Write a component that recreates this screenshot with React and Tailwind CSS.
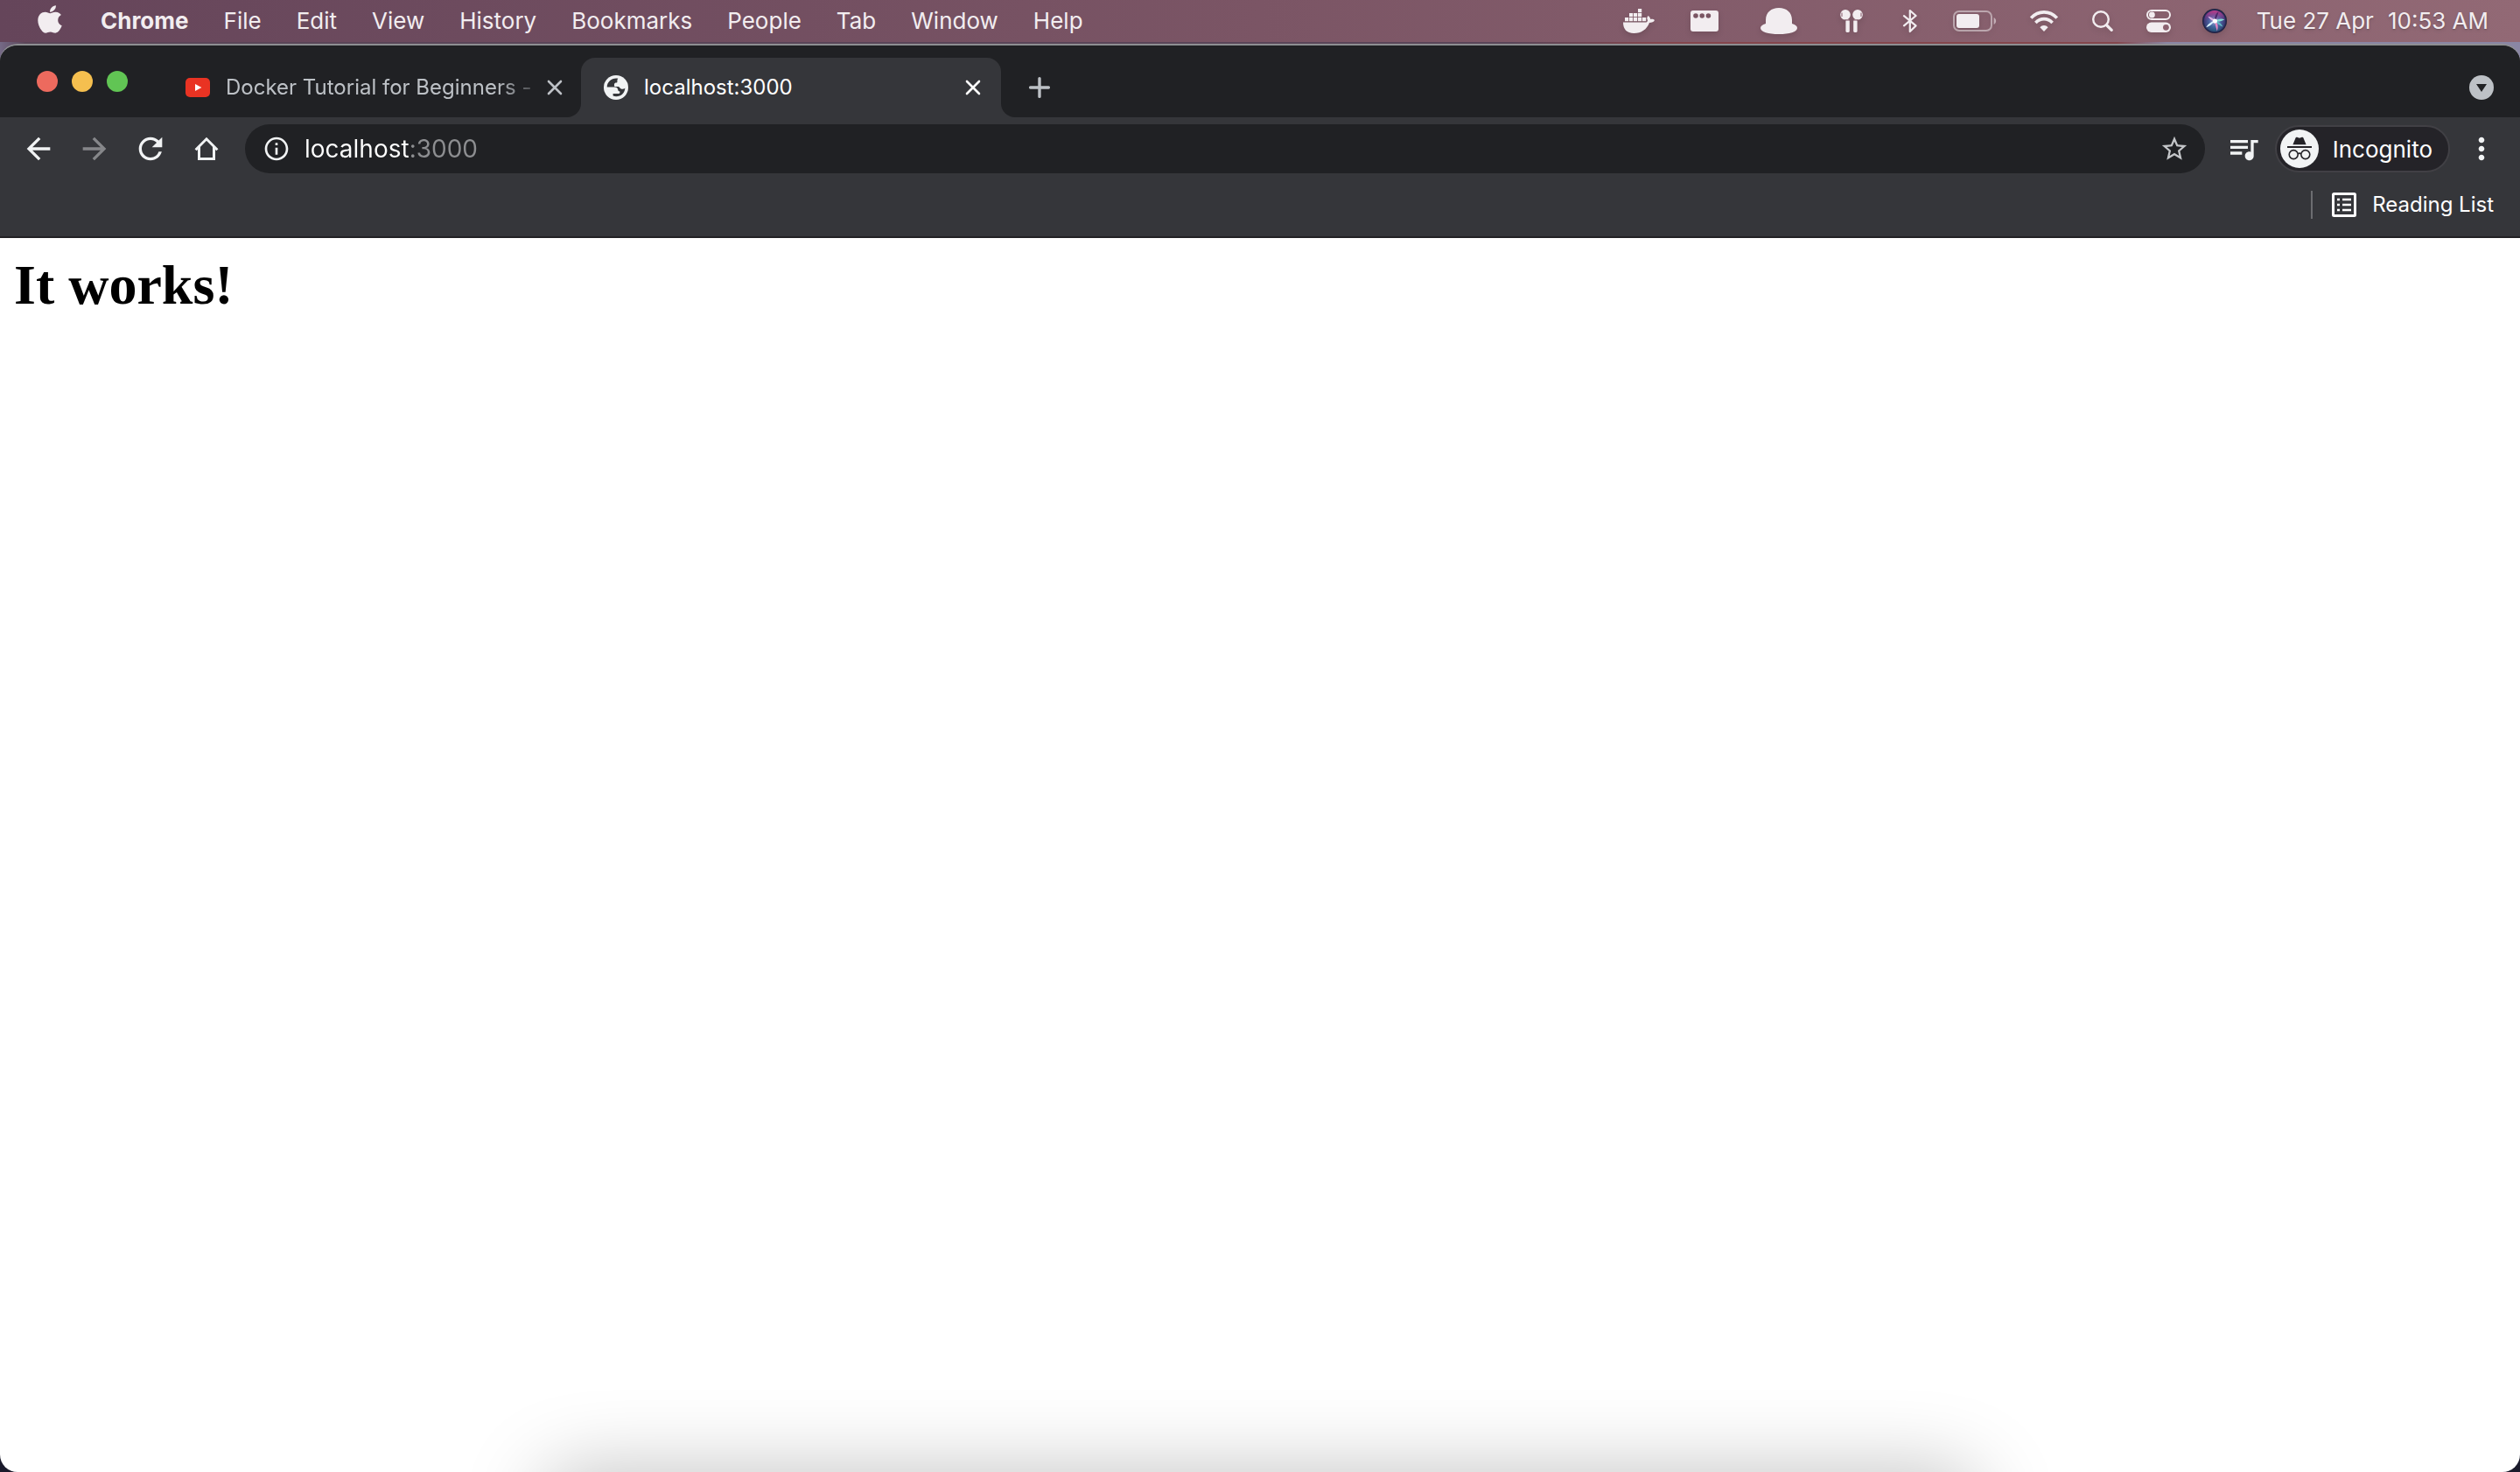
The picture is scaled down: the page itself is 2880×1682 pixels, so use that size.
import { FaApple } from "react-icons/fa";
import {
  MdArrowBack,
  MdArrowForward,
  MdRefresh,
  MdStarBorder,
  MdInfoOutline,
  MdQueueMusic,
  MdMoreVert,
} from "react-icons/md";

const MENUS = ["File", "Edit", "View", "History", "Bookmarks", "People", "Tab", "Window", "Help"];

const DOCKER_BOXES = [
  [2, 10], [7, 10], [12, 10], [17, 10], [22, 10],
  [7, 5], [12, 5], [17, 5],
  [17, 0],
];

function DockerIcon() {
  return (
    <svg viewBox="0 0 36 28" className="h-7 w-9" fill="currentColor">
      {DOCKER_BOXES.map(([x, y]) => (
        <rect key={`${x}-${y}`} x={x} y={y} width="4.2" height="4.2" />
      ))}
      <path d="M0 15.6H25.2C27 15.6 28 14.6 28 13C26.8 11.4 27.2 9.4 28.6 8C30 9 31 10.4 31.2 12C33 11.6 35 12 36 13C35 15.2 32.8 16 30 16C27 23.6 21 28 12.4 28C4 28 0 23.4 0 15.6Z" />
    </svg>
  );
}

function WindowIcon() {
  return (
    <svg viewBox="0 0 32 24" className="h-6 w-8" fill="currentColor" fillRule="evenodd">
      <path d="M3 0H29A3 3 0 0 1 32 3V21A3 3 0 0 1 29 24H3A3 3 0 0 1 0 21V3A3 3 0 0 1 3 0ZM6 3.2A2.8 2.8 0 1 0 6 8.8A2.8 2.8 0 1 0 6 3.2ZM13.2 3.2A2.8 2.8 0 1 0 13.2 8.8A2.8 2.8 0 1 0 13.2 3.2ZM20.4 3.2A2.8 2.8 0 1 0 20.4 8.8A2.8 2.8 0 1 0 20.4 3.2Z" />
    </svg>
  );
}

function HatIcon() {
  return (
    <svg viewBox="0 0 42 30" className="h-[30px] w-[42px]" fill="currentColor">
      <path d="M6 18V14C6 5 12.4 0 21 0S36 5 36 14V18C40 19 42 21 42 23C42 27.4 33 30 21 30S0 27.4 0 23C0 21 2 19 6 18Z" />
    </svg>
  );
}

function EarbudsIcon() {
  return (
    <svg viewBox="0 0 26 26" className="size-[26px]" fill="currentColor">
      <circle cx="6" cy="5.8" r="5.8" />
      <circle cx="20" cy="5.8" r="5.8" />
      <path d="M2 3.6V8M24 3.6V8" stroke="#85596a" strokeWidth="1" />
      <rect x="6.4" y="11.6" width="4.4" height="14.4" rx="1.4" />
      <rect x="15.2" y="11.6" width="4.4" height="14.4" rx="1.4" />
      <path d="M5.6 12H11M15 12H20.4" stroke="#85596a" strokeWidth="1" />
    </svg>
  );
}

function BluetoothIcon() {
  return (
    <svg viewBox="0 0 18 28" className="h-7 w-[18px]" fill="none" stroke="currentColor" strokeWidth="2.2" strokeLinejoin="round" strokeLinecap="round">
      <path d="M2 8.2L15.6 19.4L8.8 26V2L15.6 8L2 19.4" />
    </svg>
  );
}

function BatteryIcon() {
  return (
    <svg viewBox="0 0 50 24" className="h-6 w-[50px]">
      <rect x="1" y="1" width="43" height="22" rx="6" fill="none" stroke="currentColor" strokeOpacity="0.5" strokeWidth="2" />
      <rect x="4" y="4" width="26" height="16" rx="3" fill="currentColor" />
      <path d="M46.6 8C50 9.4 50 14.6 46.6 16Z" fill="currentColor" fillOpacity="0.55" />
    </svg>
  );
}

function WifiIcon() {
  return (
    <svg viewBox="0 0 32 24" className="h-6 w-8" fill="none" stroke="currentColor" strokeWidth="3.6">
      <path d="M1.2 8.6C9.4 -0.4 22.6 -0.4 30.8 8.6" />
      <path d="M6.4 14C11.8 8.2 20.2 8.2 25.6 14" />
      <path d="M16 24L11.4 19.2C14 16.4 18 16.4 20.6 19.2Z" fill="currentColor" stroke="none" />
    </svg>
  );
}

function SearchIcon() {
  return (
    <svg viewBox="0 0 24 24" className="size-6" fill="none" stroke="currentColor" strokeLinecap="round">
      <circle cx="10" cy="10" r="8.8" strokeWidth="2.4" />
      <path d="M16.8 17L22.2 22.4" strokeWidth="3.2" />
    </svg>
  );
}

function ControlCenterIcon() {
  return (
    <svg viewBox="0 0 28 26" className="h-[26px] w-7" fill="none">
      <rect x="1" y="1" width="26" height="10" rx="5" stroke="currentColor" strokeWidth="2" />
      <circle cx="6.4" cy="6" r="3.4" fill="currentColor" />
      <rect x="0" y="14.6" width="28" height="11.4" rx="5.7" fill="currentColor" />
      <circle cx="22.4" cy="20.3" r="3.4" fill="#8c6270" />
    </svg>
  );
}

function SiriIcon() {
  return (
    <svg viewBox="0 0 28 28" className="size-7">
      <defs>
        <radialGradient id="orb" cx="0.5" cy="0.5" r="0.5">
          <stop offset="0" stopColor="#b9c8ea" />
          <stop offset="0.45" stopColor="#3d6fa6" />
          <stop offset="0.85" stopColor="#2a3266" />
          <stop offset="1" stopColor="#1b1b36" />
        </radialGradient>
        <linearGradient id="tint" x1="0" y1="0" x2="0" y2="1">
          <stop offset="0" stopColor="#d03c8c" stopOpacity="0.9" />
          <stop offset="0.5" stopColor="#8a3c9c" stopOpacity="0.2" />
          <stop offset="1" stopColor="#1f8a94" stopOpacity="0.4" />
        </linearGradient>
      </defs>
      <circle cx="14" cy="14" r="14" fill="url(#orb)" />
      <circle cx="14" cy="14" r="12" fill="url(#tint)" />
      <path d="M14 13C14 8 16 4.6 18.6 3.4C17.4 7 16.4 10 15 14Z" fill="#4a2868" />
      <path d="M15 14C17.6 16 18.4 21 16.8 25.4C15.4 21 14.6 18 14 14Z" fill="#e887c2" />
      <path d="M14 14C18 11.4 22 10.8 25.4 12.2C21.6 14.4 18 15.2 14 14Z" fill="#86d9d4" />
      <path d="M15 14C19 14.6 22 17 23.4 20.6C19.8 19.4 17 17 15 14Z" fill="#5fb8c4" />
      <path d="M14 13.6C11 18 8 20.4 4.2 21.2C6.4 17.6 10 15 14 13.6Z" fill="#d8f2ff" />
      <path d="M15 15C11 13.6 8 11.6 6.4 8.8C10 9.4 13 11.6 15 15Z" fill="#e4b4e4" />
      <circle cx="14.4" cy="14" r="2.6" fill="#ffffff" />
    </svg>
  );
}

function YouTubeIcon() {
  return (
    <svg viewBox="0 0 28 22" className="h-[22px] w-7 shrink-0">
      <rect width="28" height="22" rx="5" fill="#e93323" />
      <path d="M11 7L18.4 11L11 15Z" fill="#ffffff" />
    </svg>
  );
}

function GlobeIcon() {
  return (
    <svg viewBox="0 0 28 28" className="size-7">
      <circle cx="14" cy="14" r="14" fill="#f1f3f4" />
      <path
        fill="#35363a"
        d="M16.4 3.8C9.4 2.6 3.8 7.4 3.7 13.6H12.4C14.6 13.6 16 14.8 16.2 16.6C16.4 17.8 17 18.6 18.4 18.6V19.4C18.4 20.4 17.6 21 16.6 21H10.6V23.6C17.6 26 24.4 21 24.3 14.4C23.2 15.6 21.8 16 20.4 15.8C18.6 15.4 18.4 13.8 17 13H12.8C12 12.6 11.8 11.6 12 10.4C12.2 9.2 13 8.6 14.4 8.6C15.4 8.4 15.6 7.6 15.4 6.4C15.4 5.2 15.8 4.4 16.4 3.8Z"
      />
    </svg>
  );
}

function CloseIcon() {
  return (
    <svg viewBox="0 0 24 24" className="size-6" fill="none" stroke="currentColor" strokeWidth="2.6" strokeLinecap="round">
      <path d="M5 5L19 19M19 5L5 19" />
    </svg>
  );
}

function HomeIcon() {
  return (
    <svg viewBox="0 0 40 40" className="size-10" fill="none" stroke="currentColor" strokeWidth="3">
      <path d="M7.6 21.2L20 8.8L32.4 21.2" />
      <path d="M11.5 18V31.4H28.5V18" />
    </svg>
  );
}

function IncognitoIcon() {
  return (
    <svg viewBox="0 0 44 44" className="size-11">
      <circle cx="22" cy="22" r="22" fill="#f1f3f4" />
      <g fill="#242328">
        <path d="M14.4 17.2L17.2 10.4C17.6 9 18.6 8.6 19.8 9L22 9.8L24.2 9C25.4 8.6 26.4 9 26.8 10.4L29.6 17.2Z" />
        <rect x="8" y="19" width="28" height="2" />
      </g>
      <g fill="none" stroke="#242328" strokeWidth="1.6">
        <circle cx="15.2" cy="28.6" r="5" />
        <circle cx="28.8" cy="28.6" r="5" />
        <path d="M20.2 28C21.2 27 22.8 27 23.8 28" />
      </g>
    </svg>
  );
}

function ReadingListIcon() {
  return (
    <svg viewBox="0 0 28 28" className="size-7" fill="none" stroke="currentColor">
      <rect x="1.5" y="1.5" width="25" height="25" rx="1" strokeWidth="3" />
      <path d="M6 8H9M6 14H9M6 20H9M12 8H22M12 14H22M12 20H22" strokeWidth="2.6" />
    </svg>
  );
}

function MenuBar() {
  return (
    <header className="flex h-12 items-center justify-between bg-linear-to-r from-[#65455a] via-[#7b5565] to-[#926975] pr-9 pl-[43px] text-[#f2edf0]">
      <nav className="flex items-center gap-10 text-[26px] leading-none text-shadow-md">
        <button type="button" aria-label="Apple menu" className="-mt-1 w-8">
          <FaApple className="h-9 w-7" preserveAspectRatio="none" />
        </button>
        <button type="button" className="font-bold">Chrome</button>
        {MENUS.map((m) => (
          <button type="button" key={m}>{m}</button>
        ))}
      </nav>
      <div className="flex items-center gap-[34px] [&_svg]:drop-shadow-md">
        <button type="button" aria-label="Docker" className="flex w-10 justify-center"><DockerIcon /></button>
        <button type="button" aria-label="Window manager" className="flex w-[42px] justify-center"><WindowIcon /></button>
        <button type="button" aria-label="Bartender" className="flex w-[60px] justify-center"><HatIcon /></button>
        <button type="button" aria-label="Earbuds" className="flex w-[38px] justify-center"><EarbudsIcon /></button>
        <button type="button" aria-label="Bluetooth" className="flex w-7 justify-center"><BluetoothIcon /></button>
        <button type="button" aria-label="Battery" className="flex w-[52px] justify-center"><BatteryIcon /></button>
        <button type="button" aria-label="Wi-Fi" className="flex w-[38px] justify-center"><WifiIcon /></button>
        <button type="button" aria-label="Spotlight" className="flex w-7 justify-center"><SearchIcon /></button>
        <button type="button" aria-label="Control Center" className="flex w-8 justify-center"><ControlCenterIcon /></button>
        <button type="button" aria-label="Siri" className="flex w-7 justify-center"><SiriIcon /></button>
        <button type="button" className="flex gap-4 text-[26px] leading-none whitespace-nowrap text-shadow-md">
          <span>Tue 27 Apr</span>
          <span>10:53 AM</span>
        </button>
      </div>
    </header>
  );
}

function TabStrip() {
  return (
    <div className="flex h-[82px] bg-[#35363a]">
      <div className="flex w-[664px] shrink-0 items-center rounded-br-2xl bg-[#202124] pr-[18px] pl-[42px]">
        <div className="flex gap-4">
          <button type="button" aria-label="Close window" className="size-6 rounded-full bg-[#ed6a5e]" />
          <button type="button" aria-label="Minimize window" className="size-6 rounded-full bg-[#f5bf4f]" />
          <button type="button" aria-label="Zoom window" className="size-6 rounded-full bg-[#61c554]" />
        </div>
        <div className="flex min-w-0 flex-1 items-center pt-[14px] pl-[66px]">
          <button type="button" className="flex min-w-0 flex-1 items-center gap-[18px] text-left text-[24px] text-[#bdc1c6]">
            <YouTubeIcon />
            <span className="flex-1 overflow-hidden whitespace-nowrap [mask-image:linear-gradient(to_right,black_88%,transparent_104%)]">
              Docker Tutorial for Beginners -
            </span>
          </button>
          <button type="button" aria-label="Close tab" className="ml-3 text-[#bdc1c6]"><CloseIcon /></button>
        </div>
      </div>
      <div className="w-[480px] shrink-0 bg-[#202124] pt-[14px]">
        <div className="flex h-[68px] items-center rounded-t-2xl bg-[#35363a] pr-5 pl-[26px] text-white">
          <button type="button" className="flex flex-1 items-center gap-[18px] text-left text-[24px]">
            <GlobeIcon />
            localhost:3000
          </button>
          <button type="button" aria-label="Close tab"><CloseIcon /></button>
        </div>
      </div>
      <div className="flex flex-1 items-center justify-between rounded-bl-2xl bg-[#202124] px-[30px] pt-[14px]">
        <button type="button" aria-label="New tab" className="text-[#bdc1c6]">
          <svg viewBox="0 0 28 28" className="size-7" fill="none" stroke="currentColor" strokeWidth="3.4" strokeLinecap="round">
            <path d="M14 3.6V24.4M3.6 14H24.4" />
          </svg>
        </button>
        <button type="button" aria-label="Search tabs">
          <svg viewBox="0 0 28 28" className="size-7">
            <circle cx="14" cy="14" r="14" fill="#bdc1c6" />
            <path d="M8 10H20L14 19Z" fill="#202124" />
          </svg>
        </button>
      </div>
    </div>
  );
}

function Toolbar() {
  return (
    <div className="flex h-16 items-center gap-6 bg-[#35363a] px-6 pt-2 text-[#f1f3f4]">
      <button type="button" aria-label="Back"><MdArrowBack size={40} /></button>
      <button type="button" aria-label="Forward" disabled className="text-[#86878a]"><MdArrowForward size={40} /></button>
      <button type="button" aria-label="Reload"><MdRefresh size={40} /></button>
      <button type="button" aria-label="Home"><HomeIcon /></button>
      <div className="flex h-14 flex-1 items-center rounded-full bg-[#202124] pr-[18px] pl-5">
        <button type="button" aria-label="View site information"><MdInfoOutline size={32} /></button>
        <input
          type="text"
          aria-label="Address and search bar"
          defaultValue="localhost:3000"
          className="ml-4 flex-1 bg-linear-to-r from-white from-[122px] to-[#8d8e91] to-[122px] bg-clip-text text-[28px] text-transparent outline-none"
        />
        <button type="button" aria-label="Bookmark this page" className="text-[#c4c6c9]"><MdStarBorder size={34} /></button>
      </div>
      <div className="flex items-center gap-4">
        <button type="button" aria-label="Media controls"><MdQueueMusic size={40} /></button>
        <button type="button" className="flex h-[54px] items-center gap-4 rounded-full border-2 border-[#414045] bg-[#242328] pr-[18px] pl-1 text-[26px] text-white">
          <IncognitoIcon />
          Incognito
        </button>
        <button type="button" aria-label="Chrome menu"><MdMoreVert size={40} /></button>
      </div>
    </div>
  );
}

function BookmarksBar() {
  return (
    <div className="flex h-[74px] items-center justify-end gap-[22px] border-b-2 border-[#222124] bg-[#35363a] pr-[30px] text-[#f1f3f4]">
      <span className="h-8 w-[2px] bg-[#6c6d70]" />
      <button type="button" className="flex items-center gap-[18px] text-[24px] text-white">
        <ReadingListIcon />
        Reading List
      </button>
    </div>
  );
}

export default function App() {
  return (
    <div className="flex min-h-screen flex-col bg-[#1a1a2b] font-['Inter',sans-serif]">
      <MenuBar />
      <div className="flex flex-1 flex-col bg-[linear-gradient(to_right,#756a86_0,#5a4558_1%,#5a4558_60%,#84464c_66%,#84464c_84%,#8a86a4_86%,#8a86a4_100%)] bg-size-[100%_60px] bg-no-repeat pt-0.5">
        <div className="relative flex flex-1 flex-col overflow-hidden rounded-[20px] border-t-2 border-[#8e8f92] bg-white">
          <TabStrip />
          <Toolbar />
          <BookmarksBar />
          <main className="flex-1 px-4 py-[18px]">
            <h1 className="font-['Liberation_Serif',serif] text-[64px] leading-[72px] font-bold text-black">It works!</h1>
          </main>
          <div className="pointer-events-none absolute top-full left-1/2 h-20 w-[57%] -translate-x-1/2 rounded-t-[40px] shadow-[0_0_90px_rgba(0,0,0,0.26)]" />
        </div>
      </div>
    </div>
  );
}
